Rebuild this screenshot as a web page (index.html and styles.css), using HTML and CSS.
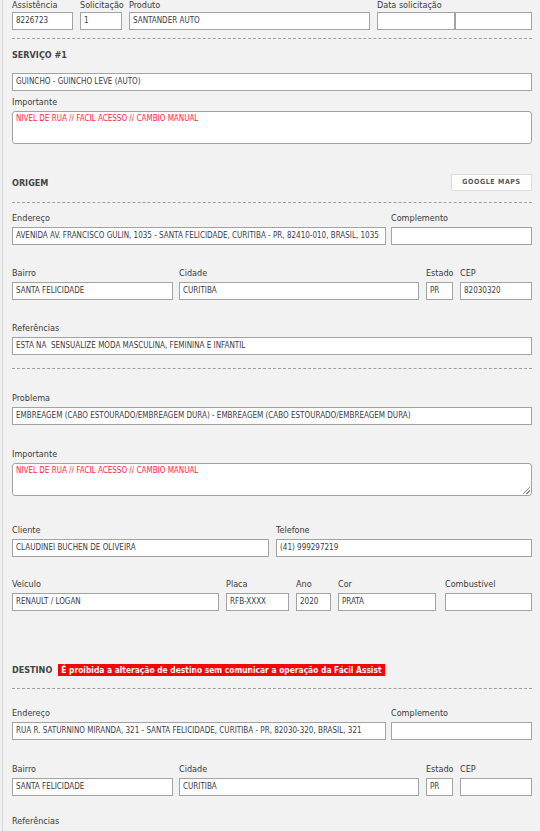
FILE: index.html
```html
<!DOCTYPE html>
<html lang="pt-BR">
<head>
<meta charset="utf-8">
<title>Serviço</title>
<link rel="stylesheet" href="styles.css">
</head>
<body>
<div class="page">

  <div class="row top-row">
    <div class="f w-assist"><div class="lbl">Assistência</div><div class="in">8226723</div></div>
    <div class="f w-solic"><div class="lbl">Solicitação</div><div class="in">1</div></div>
    <div class="f w-prod"><div class="lbl">Produto</div><div class="in">SANTANDER AUTO</div></div>
    <div class="f w-data"><div class="lbl">Data solicitação</div>
      <div class="pair"><div class="in d1"></div><div class="in d2"></div></div>
    </div>
  </div>

  <div class="dash d-top"></div>

  <div class="heading h-serv">SERVIÇO #1</div>
  <div class="in full m-serv">GUINCHO - GUINCHO LEVE (AUTO)</div>

  <div class="f full m-imp1"><div class="lbl">Importante</div><div class="ta red">NIVEL DE RUA // FACIL ACESSO // CAMBIO MANUAL</div></div>

  <div class="sec-head m-origem">
    <div class="heading">ORIGEM</div>
    <div class="gmaps">GOOGLE MAPS</div>
  </div>

  <div class="dash d-origem"></div>

  <div class="row m-end1">
    <div class="f w-end"><div class="lbl">Endereço</div><div class="in">AVENIDA AV. FRANCISCO GULIN, 1035 - SANTA FELICIDADE, CURITIBA - PR, 82410-010, BRASIL, 1035</div></div>
    <div class="f w-comp"><div class="lbl">Complemento</div><div class="in"></div></div>
  </div>

  <div class="row g-bairro m-22">
    <div class="f w-bairro"><div class="lbl">Bairro</div><div class="in">SANTA FELICIDADE</div></div>
    <div class="f w-cidade"><div class="lbl">Cidade</div><div class="in">CURITIBA</div></div>
    <div class="f w-estado"><div class="lbl">Estado</div><div class="in">PR</div></div>
    <div class="f w-cep"><div class="lbl">CEP</div><div class="in">82030320</div></div>
  </div>

  <div class="f full m-22"><div class="lbl">Referências</div><div class="in">ESTA NA&nbsp; SENSUALIZE MODA MASCULINA, FEMININA E INFANTIL</div></div>

  <div class="dash d-mid"></div>

  <div class="f full m-23"><div class="lbl">Problema</div><div class="in">EMBREAGEM (CABO ESTOURADO/EMBREAGEM DURA) - EMBREAGEM (CABO ESTOURADO/EMBREAGEM DURA)</div></div>

  <div class="f full m-23"><div class="lbl">Importante</div><div class="ta red">NIVEL DE RUA // FACIL ACESSO // CAMBIO MANUAL<span class="grip"></span></div></div>

  <div class="row m-cli">
    <div class="f w-cli"><div class="lbl">Cliente</div><div class="in">CLAUDINEI BUCHEN DE OLIVEIRA</div></div>
    <div class="f w-tel"><div class="lbl">Telefone</div><div class="in">(41) 999297219</div></div>
  </div>

  <div class="row g-veic m-veic">
    <div class="f w-veic"><div class="lbl">Veículo</div><div class="in">RENAULT / LOGAN</div></div>
    <div class="f w-placa"><div class="lbl">Placa</div><div class="in">RFB-XXXX</div></div>
    <div class="f w-ano"><div class="lbl">Ano</div><div class="in">2020</div></div>
    <div class="f w-cor"><div class="lbl">Cor</div><div class="in">PRATA</div></div>
    <div class="f w-comb"><div class="lbl">Combustível</div><div class="in"></div></div>
  </div>

  <div class="sec-head m-destino">
    <div class="heading">DESTINO</div>
    <div class="banner">É proibida a alteração de destino sem comunicar a operação da Fácil Assist</div>
  </div>

  <div class="dash d-destino"></div>

  <div class="row m-end2">
    <div class="f w-end"><div class="lbl">Endereço</div><div class="in">RUA R. SATURNINO MIRANDA, 321 - SANTA FELICIDADE, CURITIBA - PR, 82030-320, BRASIL, 321</div></div>
    <div class="f w-comp"><div class="lbl">Complemento</div><div class="in"></div></div>
  </div>

  <div class="row g-bairro m-23">
    <div class="f w-bairro"><div class="lbl">Bairro</div><div class="in">SANTA FELICIDADE</div></div>
    <div class="f w-cidade"><div class="lbl">Cidade</div><div class="in">CURITIBA</div></div>
    <div class="f w-estado"><div class="lbl">Estado</div><div class="in">PR</div></div>
    <div class="f w-cep"><div class="lbl">CEP</div><div class="in"></div></div>
  </div>

  <div class="f full m-ref2"><div class="lbl">Referências</div></div>

</div>
</body>
</html>
```
FILE: styles.css
```css
html, body {
  margin: 0;
  padding: 0;
  background: #f2f2f2;
}
body {
  font-family: "DejaVu Sans", "Liberation Sans", sans-serif;
  font-stretch: condensed;
  color: #333;
  overflow: hidden;
  height: 831px;
}
.page {
  margin-left: 2px;
  border-left: 1px solid #d6d6d6;
  padding-left: 9px;
  width: 520px;
  height: 831px;
}
.row {
  display: flex;
  gap: 7px;
}
.f {
  display: flex;
  flex-direction: column;
}
.lbl {
  font-size: 9px;
  line-height: 13px;
  height: 13px;
  margin-bottom: 2px;
  color: #3a3a3a;
  white-space: nowrap;
}
.top-row .lbl {
  line-height: 11px;
  height: 11px;
  margin-bottom: 1px;
}
.in {
  box-sizing: border-box;
  height: 18px;
  background: #fff;
  border: 1px solid #a3a3a3;
  font-size: 8px;
  line-height: 16px;
  padding: 0 3px;
  color: #3b3b48;
  white-space: nowrap;
  overflow: hidden;
}
.full { width: 520px; }
.w-assist { width: 61px; }
.w-solic { width: 42px; }
.w-prod { width: 241px; }
.w-data { width: 155px; }
.pair { display: flex; }
.d1 { width: 78px; }
.d2 { width: 77px; }

.dash {
  border-top: 1px dashed #a0a0a0;
  width: 520px;
}
.d-top { margin-top: 8px; }
.heading {
  font-size: 9px;
  font-weight: bold;
  line-height: 14px;
  color: #444;
}
.h-serv { margin-top: 9px; }
.m-serv { margin-top: 11px; }
.m-imp1 { margin-top: 5px; }
.ta {
  box-sizing: border-box;
  height: 33px;
  background: #fff;
  border: 1px solid #a3a3a3;
  border-radius: 3px;
  font-size: 8px;
  line-height: 12px;
  padding: 1px 3px;
  position: relative;
}
.red { color: #ff1f3d; }
.grip {
  position: absolute;
  right: 1px;
  bottom: 1px;
  width: 7px;
  height: 7px;
  background:
    linear-gradient(135deg, transparent 0 45%, #8a8a8a 45% 55%, transparent 55% 70%, #8a8a8a 70% 80%, transparent 80%);
}
.sec-head {
  display: flex;
  align-items: center;
  justify-content: space-between;
  width: 520px;
  height: 17px;
}
.m-origem { margin-top: 30px; }
.gmaps {
  box-sizing: border-box;
  width: 81px;
  height: 17px;
  background: #fff;
  border: 1px solid #dcdcdc;
  font-size: 7px;
  font-weight: bold;
  letter-spacing: 0.6px;
  color: #555;
  text-align: center;
  line-height: 15px;
}
.d-origem { margin-top: 11px; }
.m-end1 { margin-top: 9px; gap: 5px; }
.w-end { width: 374px; }
.w-comp { width: 141px; }
.m-22 { margin-top: 22px; }
.m-23 { margin-top: 23px; }
.g-bairro { gap: 7px; }
.w-bairro { width: 161px; margin-right: -1px; }
.w-cidade { width: 240px; }
.w-estado { width: 27px; }
.w-cep { width: 72px; }
.d-mid { margin-top: 13px; }
.m-cli { margin-top: 28px; }
.w-cli { width: 257px; }
.w-tel { width: 256px; }
.m-veic { margin-top: 21px; }
.w-veic { width: 207px; }
.w-placa { width: 63px; }
.w-ano { width: 35px; }
.w-cor { width: 98px; margin-right: 2px; }
.w-comb { width: 87px; }
.m-destino {
  margin-top: 50px;
  justify-content: flex-start;
  gap: 6px;
}
.banner {
  background: #ff0000;
  color: #fff;
  font-weight: bold;
  font-size: 8.4px;
  line-height: 12px;
  padding: 0 3px;
  white-space: nowrap;
}
.d-destino { margin-top: 10px; }
.m-end2 { margin-top: 18px; gap: 5px; }
.m-ref2 { margin-top: 19px; }
```
